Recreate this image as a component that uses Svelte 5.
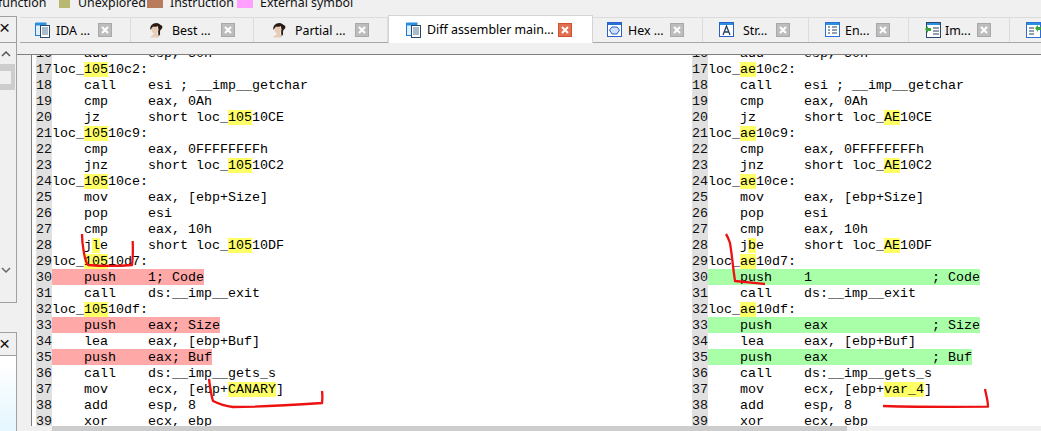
<script>
  const L = [
    [16, '', [['    add     esp, 30h']]],
    [17, '', [['loc_'], ['105', 1], ['10c2:']], [['loc_'], ['ae', 1], ['10c2:']]],
    [18, '', [['    call    esi ; __imp__getchar']]],
    [19, '', [['    cmp     eax, 0Ah']]],
    [20, '', [['    jz      short loc_'], ['105', 1], ['10CE']], [['    jz      short loc_'], ['AE', 1], ['10CE']]],
    [21, '', [['loc_'], ['105', 1], ['10c9:']], [['loc_'], ['ae', 1], ['10c9:']]],
    [22, '', [['    cmp     eax, 0FFFFFFFFh']]],
    [23, '', [['    jnz     short loc_'], ['105', 1], ['10C2']], [['    jnz     short loc_'], ['AE', 1], ['10C2']]],
    [24, '', [['loc_'], ['105', 1], ['10ce:']], [['loc_'], ['ae', 1], ['10ce:']]],
    [25, '', [['    mov     eax, [ebp+Size]']]],
    [26, '', [['    pop     esi']]],
    [27, '', [['    cmp     eax, 10h']]],
    [28, '', [['    j'], ['l', 1], ['e     short loc_'], ['105', 1], ['10DF']], [['    j'], ['b', 1], ['e     short loc_'], ['AE', 1], ['10DF']]],
    [29, '', [['loc_'], ['105', 1], ['10d7:']], [['loc_'], ['ae', 1], ['10d7:']]],
    [30, 'd', [['    push    1; Code']], [['    push    1               ; Code']]],
    [31, '', [['    call    ds:__imp__exit']]],
    [32, '', [['loc_'], ['105', 1], ['10df:']], [['loc_'], ['ae', 1], ['10df:']]],
    [33, 'd', [['    push    eax; Size']], [['    push    eax             ; Size']]],
    [34, '', [['    lea     eax, [ebp+Buf]']]],
    [35, 'd', [['    push    eax; Buf']], [['    push    eax             ; Buf']]],
    [36, '', [['    call    ds:__imp__gets_s']]],
    [37, '', [['    mov     ecx, [ebp+'], ['CANARY', 1], [']']], [['    mov     ecx, [ebp+'], ['var_4', 1], [']']]],
    [38, '', [['    add     esp, 8']]],
    [39, '', [['    xor     ecx, ebp']]]
  ];
  const tabs = [
    { t: 'IDA ...', i: 'doc', w: 111, pad: 15, gap: 5 },
    { t: 'Best ...', i: 'face', w: 123, pad: 16, gap: 9 },
    { t: 'Partial ...', i: 'face', w: 134, pad: 16, gap: 9 },
    { t: 'Diff assembler main...', i: 'doc', w: 205, pad: 17, gap: 5, active: true },
    { t: 'Hex ...', i: 'hex', w: 110, pad: 14, gap: 5 },
    { t: 'Str...', i: 'str', w: 106, pad: 16, gap: 8 },
    { t: 'En...', i: 'en', w: 100, pad: 16, gap: 4 },
    { t: 'Im...', i: 'im', w: 101, pad: 16, gap: 4 },
    { t: '', i: 'ex', w: 31, pad: 16, gap: 0 }
  ];
</script>

{#snippet icon(k)}
  <svg class="ic" width="16" height="16" viewBox="0 0 16 16">
    {#if k === 'face'}
      <path d="M3 15.500c1-2 3-2.500 4-3.500l-2-2c-1-3 0-6 3-6 2 0 3 2 3 4l-1 3 2 4.500z" fill="#e8cdb6"/>
      <path d="M3.500 8c-1-4 2-7 6-7 2 0 3 1 4 2 2 0 2.500 3 1 4-1 1-2 2-1.500 4 .5 1.500-.5 2.500-1.500 3 0-3-1-4 0-6 0-2-.5-3-1-4-1.500 1-3 1-4.500 .5-.8 1-1.500 2-2.500 3.500z" fill="#2a1a12"/>
    {:else if k === 'doc'}
      <rect x="0.500" y="1.500" width="10" height="12" fill="#dfeffb" stroke="#1e7bd0"/>
      <rect x="0.500" y="0.500" width="11" height="3" fill="#2b8fe0"/>
      <rect x="5.500" y="3.500" width="9" height="12" fill="#fff" stroke="#27476b"/>
      <path d="M7 6h6M7 8h6M7 10h6M7 12h6" stroke="#5a7896"/>
    {:else if k === 'hex'}
      <rect x="0.500" y="0.500" width="14" height="14" fill="#fff" stroke="#2a5fc8"/>
      <rect x="1" y="1" width="13" height="2" fill="#2a6fd8"/>
      <path d="M5 5h5l2.500 3-2.500 4h-5l-2.500-4z" fill="#cfe0ff" stroke="#2a5fc8"/>
    {:else if k === 'str'}
      <rect x="0.500" y="0.500" width="14" height="14" fill="#fff" stroke="#2a5fc8"/>
      <rect x="1" y="1" width="13" height="2" fill="#2a8fe0"/>
      <path d="M4 13l3.500-9 3.500 9M5.500 10h4" fill="none" stroke="#24405f" stroke-width="1.300"/>
    {:else if k === 'en'}
      <rect x="0.500" y="0.500" width="14" height="14" fill="#fff" stroke="#2a6fd8"/>
      <rect x="1" y="1" width="13" height="2" fill="#2a8fe0"/>
      <path d="M3 5h2M3 8h2M3 11h2M7 5h5M7 8h5M7 11h5" stroke="#24405f"/>
    {:else if k === 'im'}
      <rect x="1.500" y="0.500" width="14" height="15" fill="#fff" stroke="#27476b"/>
      <rect x="2" y="1" width="13" height="2" fill="#2a8fe0"/>
      <path d="M8 6h6M8 9h6M8 12h6" stroke="#24405f"/>
      <path d="M0 7l3-3v2h3v3h-3v2z" fill="#3aa53a"/>
    {:else}
      <rect x="0.500" y="0.500" width="14" height="15" fill="#fff" stroke="#2a6fd8"/>
      <rect x="1" y="1" width="13" height="2" fill="#2a8fe0"/>
      <path d="M3 6h5M3 9h5M3 12h5" stroke="#24405f"/>
      <path d="M9 6l3-3v2h3v3h-3v2z" fill="#3aa53a"/>
    {/if}
  </svg>
{/snippet}

{#snippet pane(idx)}
  <div class="code">
    {#each L as row}
      {@const segs = row[idx] ?? row[2]}
      <div class="row">
        <span class="num">{row[0]}</span>
        <span class="txt"><span class={row[1] === 'd' ? (idx === 2 ? 'del' : 'add') : ''}>{#each segs as s}{#if s[1]}<span class="hl">{s[0]}</span>{:else}{s[0]}{/if}{/each}</span></span>
      </div>
    {/each}
  </div>
{/snippet}

<div class="app">
  <div class="legend">
    <span class="lg fn">function</span><i class="sw un"></i><span class="lg une">Unexplored</span><i class="sw ins"></i><span class="lg inst">Instruction</span><i class="sw ext"></i><span class="lg">External symbol</span>
  </div>
  <div class="main">
    <aside class="side">
      <div class="sidehead"><span class="x">×</span></div>
      <div class="sidescroll">
        <svg class="chev up" width="10" height="7" viewBox="0 0 10 7"><path d="M1 6l4-4 4 4" fill="none" stroke="#555" stroke-width="1.500"/></svg>
        <div class="thumbwrap"><span class="thumb"></span></div>
        <svg class="chev down" width="10" height="7" viewBox="0 0 10 7"><path d="M1 1l4 4 4-4" fill="none" stroke="#666" stroke-width="1.500"/></svg>
      </div>
      <div class="sidehead second"><span class="x">×</span></div>
      <div class="sideblank"></div>
    </aside>
    <div class="content">
      <div class="tabs">
        {#each tabs as t}
          <div class="tab" class:active={t.active} style="width:{t.w}px;padding-left:{t.pad}px">
            <span class="icwrap" style="margin-right:{t.gap}px">{@render icon(t.i)}</span>
            {#if t.t}<span class="lbl">{t.t}</span><span class="close"><svg width="8" height="8" viewBox="0 0 8 8"><path d="M1 1l6 6M7 1l-6 6" stroke="#fff" stroke-width="2"/></svg></span>{/if}
          </div>
        {/each}
      </div>
      <div class="strip"></div>
      <div class="diff">
        <div class="pane">{@render pane(2)}</div>
        <div class="pane right">{@render pane(3)}</div>
      </div>
      <div class="bars"><div class="thumbbar"></div></div>
    </div>
  </div>
  <svg class="ink" width="1041" height="431" viewBox="0 0 1041 431">
    <g fill="none" stroke="#ee1111" stroke-width="2.300" stroke-linejoin="round">
      <path d="M82 234c0 8 1 14 2 19 1 6 2 10 4 12 12 1 32 1 44 0 1-8 1-16 .7-24"/>
      <path d="M209 379c1 8 2 16 4 22 6 3 12 5 20 6 30 0 60-2 89-4 .5-4 .5-8 0-12"/>
      <path d="M726 234c2 3 3 6 4 9 2 12 3 25 5 38 10 1 20 2 30 3"/>
      <path d="M883 406c35 1 70 1 105 .7 0-6-2-12-3-17.700"/>
    </g>
  </svg>
</div>

<style>
  :global(body) { margin: 0; background: #f0f0f0; overflow: hidden; }
  .app { position: relative; width: 1041px; height: 431px; overflow: hidden; background: #f0f0f0; font-family: "Noto Sans", sans-serif; }
  .legend { display: flex; align-items: center; height: 16px; margin-top: -7px; font-size: 12.4px; color: #111; }
  .lg { white-space: nowrap; padding-top: 2px; }
  .fn { margin-left: -2px; width: 61px; }
  .sw { width: 11px; height: 15px; display: block; flex: none; align-self: flex-start; }
  .un { background: #b8b870; margin-right: 8px; }
  .une { width: 69px; }
  .ins { background: #b87c5c; width: 16px; margin-right: 7px; }
  .inst { width: 67px; }
  .ext { background: #ff9fff; width: 16px; margin-right: 7px; }
  .main { display: flex; height: 422px; }
  .side { width: 17px; flex: none; display: flex; flex-direction: column; padding-top: 7px; }
  .sidehead { height: 26px; border: 1px solid #a0a0a0; border-left: 0; border-bottom: 0; box-sizing: border-box; position: relative; }
  .x { position: absolute; left: -1px; top: 1px; font-size: 19px; line-height: 20px; color: #111; font-family: "Liberation Sans", sans-serif; }
  .sidescroll { height: 261px; border-top: 1px solid #a0a0a0; border-right: 1px solid #a0a0a0; border-bottom: 1px solid #a0a0a0; position: relative; box-sizing: border-box; }
  .thumbwrap { position: absolute; left: 0; width: 15px; top: 21px; height: 26px; background: #cdcdcd; }
  .thumb { position: absolute; left: 0; top: 7px; width: 11px; height: 13px; background: #f0f0f0; }
  .chev { position: absolute; left: 1px; }
  .chev.up { top: 7px; }
  .chev.down { top: 224px; }
  .second { margin-top: 29px; height: 24px; border-bottom: 1px solid #a0a0a0; }
  .sideblank { flex: 1; background: linear-gradient(#fff 10%, #e4f6fe); border-right: 1px solid #a0a0a0; }
  .content { flex: 1; min-width: 0; display: flex; flex-direction: column; }
  .tabs { display: flex; height: 25px; margin-left: 3px; margin-top: 8px; border-bottom: 1px solid #a8a8a8; }
  .tab { flex: none; box-sizing: border-box; display: flex; align-items: center; padding-right: 18px; border-top: 1px solid #dcdcdc; border-right: 1px solid #dcdcdc; background: #f0f0f0; font-size: 12.4px; color: #000; }
  .tab.active { background: #fff; margin-top: -2px; height: 28px; margin-bottom: -1px; border: 1px solid #d4d4d4; border-bottom: 0; padding-right: 20px; z-index: 1; }
  .icwrap { display: flex; flex: none; }
  .ic { flex: none; }
  .lbl { white-space: nowrap; }
  .close { margin-left: auto; width: 14px; height: 14px; flex: none; box-sizing: border-box; background: #bdbdbd; border: 1px solid #a8a8a8; display: flex; align-items: center; justify-content: center; }
  .tab.active .close { background: #e07050; border-color: #d05030; }
  .strip { height: 11px; border-bottom: 1px solid #7f7f7f; }
  .diff { display: flex; height: 371px; background: #fff; overflow: hidden; margin-left: 14px; border-left: 1px solid #7f7f7f; }
  .pane { width: 656px; flex: none; overflow: hidden; }
  .pane.right { flex: 1; }
  .code { font-family: "Liberation Mono", monospace; font-size: 13.33px; line-height: 16px; margin-top: -10px; }
  .row { display: flex; height: 16px; white-space: pre; }
  .num { width: 16px; height: 15px; padding-top: 1px; flex: none; margin-left: 4px; background: #e0e0e0; color: #111; }
  .txt { color: #000; padding-top: 1px; height: 15px; }
  .del, .add { display: inline-block; vertical-align: top; height: 15px; margin-top: -1px; padding-top: 1px; }
  .del { background: #ffa8a8; }
  .add { background: #a8ffa8; }
  .hl { background: #ffff66; }
  .bars { height: 5px; background: #f0f0f0; margin-left: 35px; }
  .thumbbar { width: 795px; height: 5px; background: #cdcdcd; }
  .ink { position: absolute; left: 0; top: 0; pointer-events: none; }
</style>
